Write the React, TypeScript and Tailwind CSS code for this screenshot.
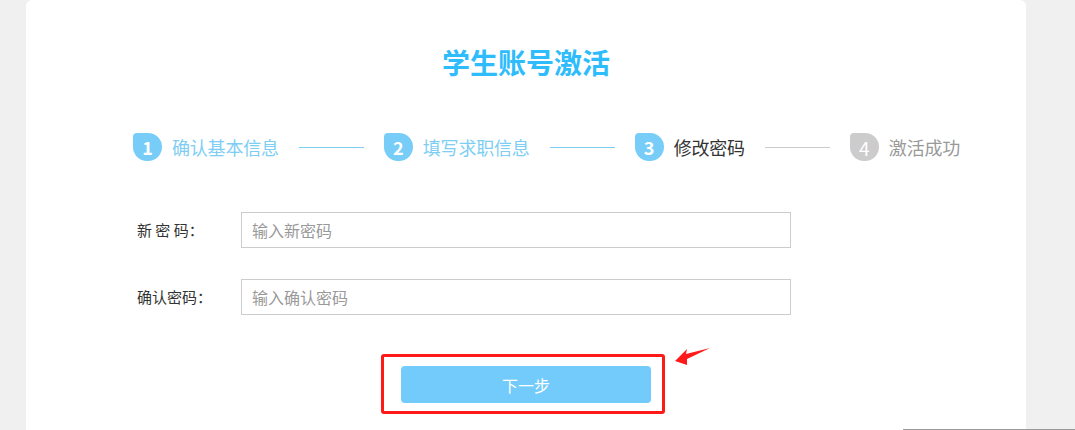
import React from 'react';

const font = { fontFamily: '"Microsoft YaHei", "Noto Sans CJK SC", "Noto Sans", sans-serif' };

type Step = { no: number; name: string; state: 'done' | 'current' | 'todo' };

const steps: Step[] = [
  { no: 1, name: '确认基本信息', state: 'done' },
  { no: 2, name: '填写求职信息', state: 'done' },
  { no: 3, name: '修改密码', state: 'current' },
  { no: 4, name: '激活成功', state: 'todo' },
];

function StepItem({ step }: { step: Step }) {
  const badge = step.state === 'todo' ? 'bg-[#cccccc] font-normal text-[19px]' : 'bg-[#78cdf8] font-bold text-[18px]';
  const text =
    step.state === 'done' ? 'text-[#7ecef4]' : step.state === 'current' ? 'text-[#333333]' : 'text-[#999999]';
  return (
    <div className="flex items-center gap-[10px]">
      <div
        className={`w-[29px] h-[28px] rounded-[14px] rounded-tl-[4px] flex items-center justify-center text-white leading-none ${badge}`}
      >
        {step.no}
      </div>
      <span className={`text-[18px] leading-none tracking-[-0.2px] ${text}`}>{step.name}</span>
    </div>
  );
}

function App() {
  return (
    <div className="relative w-[1075px] h-[430px] overflow-hidden bg-[#f0f0f0]" style={font}>
      <div className="ml-[26px] w-[1000px] h-[430px] bg-white rounded-t-[6px] flex flex-col">
        {/* Title */}
        <h1 className="mt-[47px] text-center text-[28px] leading-[30px] font-bold text-[#2ebcfc]">学生账号激活</h1>

        {/* Steps */}
        <div className="mt-[56px] pl-[107px] flex items-center">
          {steps.map((s, i) => (
            <React.Fragment key={s.no}>
              <StepItem step={s} />
              {i < steps.length - 1 && (
                <div
                  className={`mx-[20px] w-[65px] h-px ${i < 2 ? 'bg-[#7ecef4]' : 'bg-[#cccccc]'}`}
                />
              )}
            </React.Fragment>
          ))}
        </div>

        {/* Form */}
        <div className="mt-[51px] pl-[111px] flex flex-col gap-[31px]">
          <div className="flex items-center">
            <label className="w-[104px] text-[15px] text-[#333333]">新 密 码：</label>
            <input
              className="w-[550px] h-[36px] border border-[#cccccc] px-[10px] text-[16px] outline-none placeholder:text-[#999999]"
              placeholder="输入新密码"
              type="password"
            />
          </div>
          <div className="flex items-center">
            <label className="w-[104px] text-[15px] text-[#333333]">确认密码：</label>
            <input
              className="w-[550px] h-[36px] border border-[#cccccc] px-[10px] text-[16px] outline-none placeholder:text-[#999999]"
              placeholder="输入确认密码"
              type="password"
            />
          </div>
        </div>

        {/* Button with highlight */}
        <div className="mt-[39px] ml-[355px] w-[284px] h-[60px] border-[3px] border-[#ff1a1a] rounded-[3px] pl-[17px] pt-[9px]">
          <button className="w-[250px] h-[37px] rounded-[4px] bg-[#72cbfa] text-white text-[16px]">下一步</button>
        </div>
      </div>

      {/* Annotation arrow */}
      <svg className="absolute left-[668px] top-[344px] w-[46px] h-[24px]" viewBox="0 0 46 24">
        <polygon points="7,17 19,5 18,10 42,4 19,15 19,21" fill="#ff1a1a" />
      </svg>

      {/* bottom divider */}
      <div className="absolute bottom-0 left-[903px] w-[172px] h-px bg-[#999999]" />
    </div>
  );
}

export default App;
